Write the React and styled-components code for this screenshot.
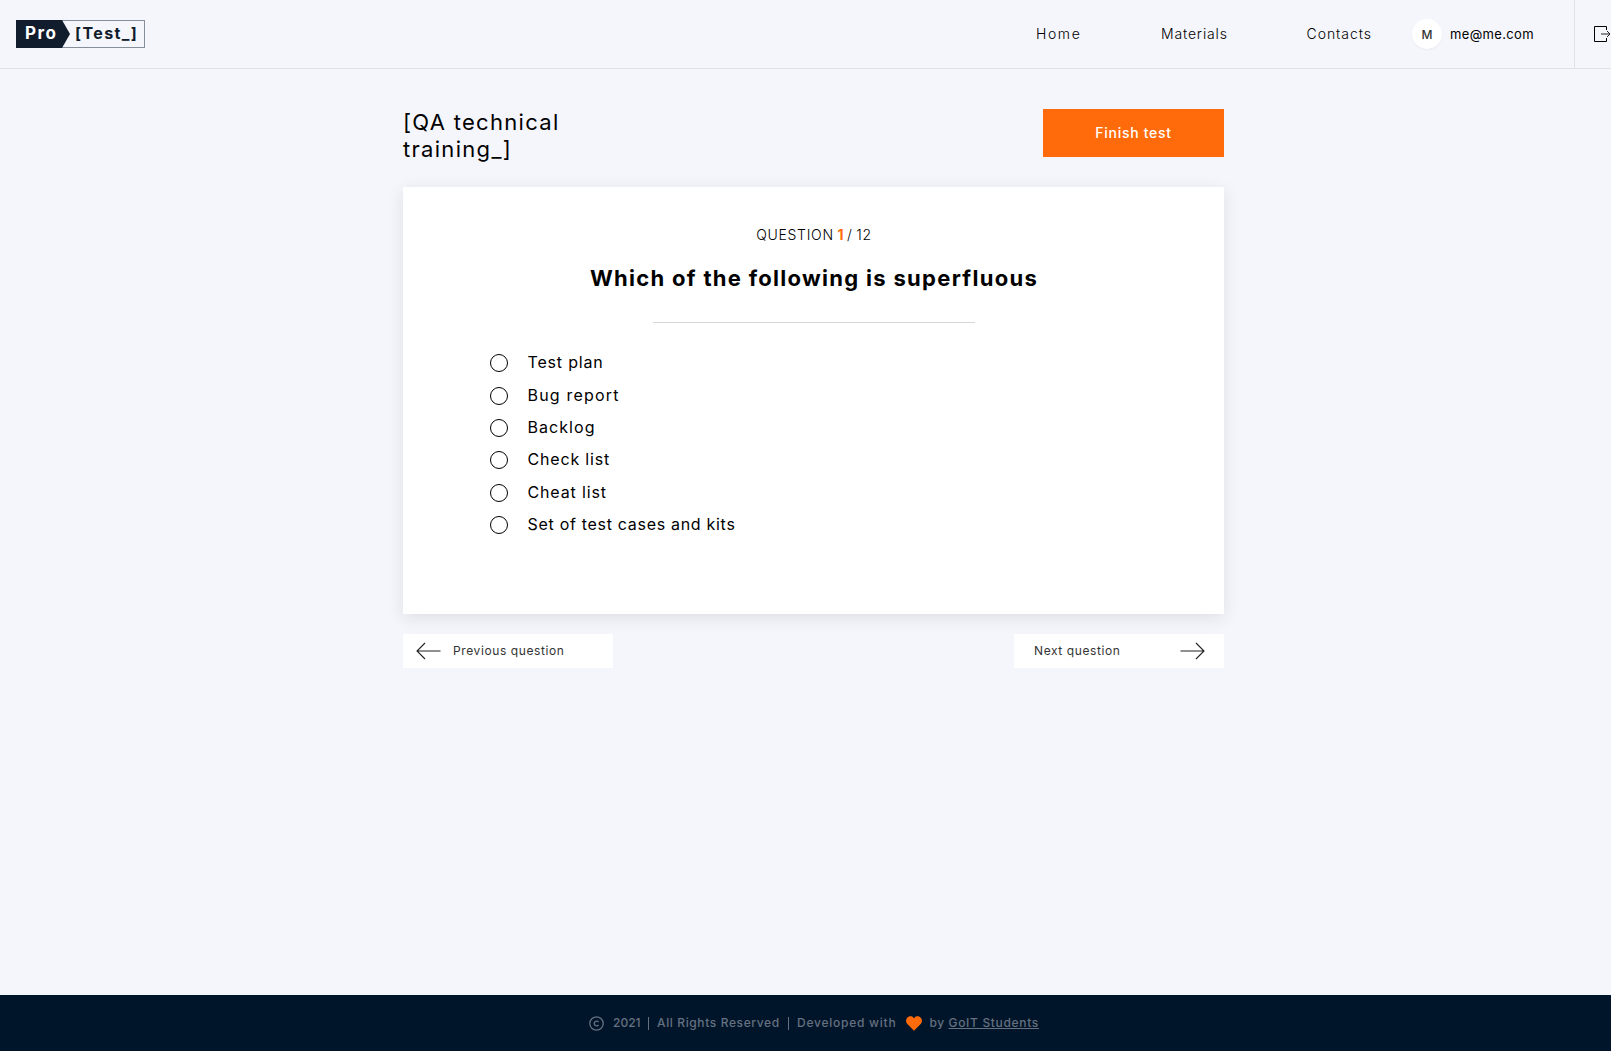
import React from "react";
import styled, { createGlobalStyle } from "styled-components";

const GlobalStyle = createGlobalStyle`
  *, *::before, *::after { box-sizing: border-box; }
  body {
    margin: 0;
    background: #f5f6fb;
    color: #000;
    font-family: Inter, "Open Sans", sans-serif;
    overflow: hidden;
  }
  h1, h2, p, ul { margin: 0; padding: 0; }
  button { font-family: inherit; border: 0; padding: 0; cursor: pointer; }
`;

const Page = styled.div`
  display: flex;
  flex-direction: column;
  height: 1051px;
  overflow: hidden;
`;

const Header = styled.header`
  display: flex;
  align-items: center;
  flex: none;
  height: 69px;
  padding-left: 16px;
  border-bottom: 1px solid #e0e1e5;
`;

const Logo = styled.a`
  display: flex;
  width: 129px;
  height: 28px;
  border: 1px solid #868d9b;
  font-size: 16px;
  font-weight: 700;
  line-height: 24px;
`;

const LogoPro = styled.span`
  width: 54px;
  height: 28px;
  margin: -1px 0 0 -1px;
  padding: 1px 0 0 9px;
  background: #111c2d;
  clip-path: polygon(0 0, 46px 0, 54px 50%, 46px 100%, 0 100%);
  color: #fff;
  font-size: 17px;
  letter-spacing: 1.5px;
`;

const LogoTest = styled.span`
  padding-left: 5px;
  color: #111c2d;
  letter-spacing: 1.4px;
`;

const Nav = styled.nav`
  display: flex;
  margin-left: auto;
`;

const NavLink = styled.a`
  width: ${(p) => p.$width}px;
  color: #000;
  font-size: 14px;
  font-weight: 300;
  line-height: 20px;
  letter-spacing: ${(p) => p.$spacing}px;
`;

const User = styled.div`
  display: flex;
  align-items: center;
  gap: 8px;
  width: 162px;
  font-size: 13px;
  letter-spacing: 0.35px;
`;

const Avatar = styled.span`
  display: flex;
  align-items: center;
  justify-content: center;
  width: 30px;
  height: 30px;
  border-radius: 50%;
  background: #fff;
  box-shadow: 0 1px 2px rgba(0, 0, 0, 0.05);
  color: #333;
  font-size: 12px;
  font-weight: 500;
  letter-spacing: 0;
`;

const SignOut = styled.button`
  display: flex;
  align-items: center;
  width: 37px;
  height: 68px;
  padding-left: 19px;
  border-left: 1px solid #e0e1e5;
  background: none;
  svg { flex: none; }
`;

const Main = styled.main`
  flex: 1;
  width: 821px;
  margin-left: 403px;
  padding-top: 40px;
`;

const TitleBar = styled.div`
  display: flex;
  justify-content: space-between;
  align-items: flex-start;
  height: 78px;
`;

const Title = styled.h1`
  width: 210px;
  font-size: 22px;
  font-weight: 400;
  line-height: 27px;
  letter-spacing: 1.3px;
`;

const FinishButton = styled.button`
  width: 181px;
  height: 48px;
  padding-bottom: 2px;
  background: #ff6b0a;
  color: #fff;
  font-size: 14px;
  font-weight: 500;
  letter-spacing: 0.7px;
`;

const Card = styled.section`
  display: flex;
  flex-direction: column;
  align-items: center;
  height: 427px;
  padding-top: 38px;
  background: #fff;
  box-shadow: 0 4px 16px rgba(17, 28, 45, 0.1);
`;

const Counter = styled.p`
  padding-left: 1px;
  font-size: 14px;
  font-weight: 300;
  line-height: 20px;
  letter-spacing: 0.7px;
  word-spacing: -1px;
  b {
    color: #ff6b0a;
    font-weight: 700;
    letter-spacing: 0;
  }
`;

const Question = styled.h2`
  padding: 19px 0 0 1px;
  font-size: 22px;
  font-weight: 700;
  line-height: 28px;
  letter-spacing: 1.3px;
  font-variant-ligatures: none;
`;

const Rule = styled.hr`
  width: 322px;
  height: 1px;
  margin: 30px 0 0;
  border: 0;
  background: #d6d7da;
`;

const Options = styled.ul`
  align-self: stretch;
  margin: 23.5px 0 0 87px;
  list-style: none;
`;

const Option = styled.li`
  display: flex;
  align-items: center;
  gap: 19.5px;
  height: 32.4px;
  padding-bottom: 1px;
  font-size: 16px;
  line-height: 20px;
  letter-spacing: ${(p) => p.$spacing}px;
`;

const Radio = styled.span`
  width: 18px;
  height: 18px;
  margin-top: 2px;
  border: 1px solid #000;
  border-radius: 50%;
`;

const Pager = styled.div`
  display: flex;
  justify-content: space-between;
  margin-top: 20px;
`;

const PagerButton = styled.button`
  display: flex;
  align-items: center;
  justify-content: ${(p) => (p.$next ? "space-between" : "flex-start")};
  gap: 12px;
  width: 210px;
  height: 34px;
  padding: ${(p) => (p.$next ? "0 19px 0 20px" : "0 13px")};
  background: #fff;
  color: #333;
  font-size: 12px;
  font-weight: 400;
  letter-spacing: 0.6px;
`;

const PagerLabel = styled.span`
  padding-bottom: 2px;
`;

const Footer = styled.footer`
  display: flex;
  justify-content: center;
  align-items: center;
  flex: none;
  height: 56px;
  padding-left: 17px;
  background: #001529;
  color: #657080;
  font-size: 12px;
  font-weight: 500;
  line-height: 16px;
`;

const FooterText = styled.span`
  width: ${(p) => p.$width}px;
  margin-left: ${(p) => p.$gap}px;
  white-space: nowrap;
  letter-spacing: ${(p) => p.$spacing}px;
`;

const FooterLink = styled.a`
  margin-left: 4px;
  letter-spacing: 0.67px;
  text-decoration: underline;
`;

const Separator = styled.span`
  width: 1px;
  height: 13px;
  margin-left: 8px;
  background: #657080;
`;

const HeartSlot = styled.span`
  display: flex;
  margin-left: 9px;
`;

const options = [
  ["Test plan", 0.82],
  ["Bug report", 1.2],
  ["Backlog", 1.05],
  ["Check list", 0.82],
  ["Cheat list", 0.85],
  ["Set of test cases and kits", 0.7],
];

function Arrow({ right }) {
  return (
    <svg width="25" height="18" viewBox="0 0 25 18" fill="none" stroke="#222" strokeWidth="1.1">
      <path d={right ? "M0.5 9H24M16 1L24 9L16 17" : "M24.5 9H1M9 1L1 9L9 17"} />
    </svg>
  );
}

export default function App() {
  return (
    <Page>
      <GlobalStyle />
      <Header>
        <Logo>
          <LogoPro>Pro</LogoPro>
          <LogoTest>[Test_]</LogoTest>
        </Logo>
        <Nav>
          <NavLink $width={125} $spacing={1.6}>Home</NavLink>
          <NavLink $width={145.5} $spacing={0.85}>Materials</NavLink>
          <NavLink $width={105.5} $spacing={0.95}>Contacts</NavLink>
        </Nav>
        <User>
          <Avatar>M</Avatar>
          me@me.com
        </User>
        <SignOut aria-label="Sign out">
          <svg width="17" height="16" viewBox="0 0 17 16" fill="none" stroke="#000">
            <path d="M12.5 4V0.5H0.5V15.5H12.5V12" />
            <path d="M7 8H16M13 5L16 8L13 11" stroke="#222" />
          </svg>
        </SignOut>
      </Header>
      <Main>
        <TitleBar>
          <Title>[QA technical training_]</Title>
          <FinishButton>Finish test</FinishButton>
        </TitleBar>
        <Card>
          <Counter>QUESTION <b>1</b> / 12</Counter>
          <Question>Which of the following is superfluous</Question>
          <Rule />
          <Options>
            {options.map(([label, spacing]) => (
              <Option key={label} $spacing={spacing}>
                <Radio />
                {label}
              </Option>
            ))}
          </Options>
        </Card>
        <Pager>
          <PagerButton>
            <Arrow />
            <PagerLabel>Previous question</PagerLabel>
          </PagerButton>
          <PagerButton $next>
            <PagerLabel>Next question</PagerLabel>
            <Arrow right />
          </PagerButton>
        </Pager>
      </Main>
      <Footer>
        <svg width="15" height="15" viewBox="0 0 15 15" fill="none" stroke="#657080" strokeWidth="1.3">
          <circle cx="7.5" cy="7.5" r="6.7" />
          <path d="M9.5 6A2.4 2.4 0 1 0 9.5 9" />
        </svg>
        <FooterText $gap={9} $width={27} $spacing={0}>2021</FooterText>
        <Separator />
        <FooterText $gap={8} $width={123} $spacing={0.62}>All Rights Reserved</FooterText>
        <Separator />
        <FooterText $gap={8} $width={99.5} $spacing={0.75}>Developed with</FooterText>
        <HeartSlot>
          <svg width="16" height="15" viewBox="0 0 16 15">
            <path d="M8 14.7L1.6 8.3C-.2 6.5-.4 3.7 1 1.9C2.7-.2 6-.3 7.5 1.7L8 2.4L8.5 1.7C10-.3 13.3-.2 15 1.9C16.4 3.7 16.2 6.5 14.4 8.3Z" fill="#ff6b0a" />
          </svg>
        </HeartSlot>
        <FooterText $gap={8} $width={15} $spacing={0.5}>by</FooterText>
        <FooterLink>GoIT Students</FooterLink>
      </Footer>
    </Page>
  );
}
